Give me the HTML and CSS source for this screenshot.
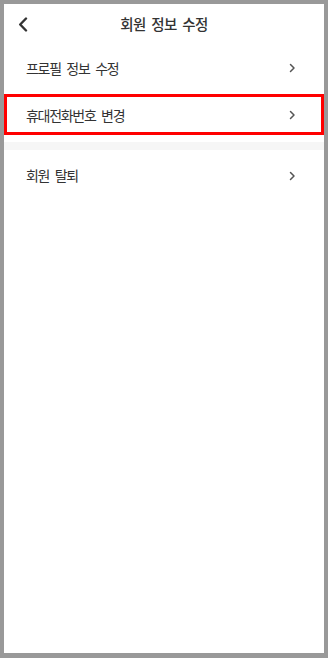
FILE: index.html
```html
<!DOCTYPE html>
<html lang="ko">
<head>
<meta charset="utf-8">
<title>회원 정보 수정</title>
<link rel="stylesheet" href="styles.css">
</head>
<body>
<div class="screen">
  <header class="header">
    <button class="back" aria-label="뒤로">
      <svg width="10" height="15" viewBox="0 0 10 15"><path d="M8 1.5 L2.2 7.5 L8 13.5" fill="none" stroke="#333" stroke-width="2.4" stroke-linecap="round" stroke-linejoin="round"/></svg>
    </button>
    <h1 class="title">회원 정보 수정</h1>
    <span class="spacer"></span>
  </header>
  <a class="row row-first" href="#"><span class="label">프로필 정보 수정</span><svg class="chev" width="7" height="10" viewBox="0 0 7 10"><path d="M1.5 1.5 L5 5 L1.5 8.5" fill="none" stroke="#555" stroke-width="1.5" stroke-linecap="round" stroke-linejoin="round"/></svg></a>
  <a class="row row-marked" href="#"><span class="label">휴대전화번호 변경</span><svg class="chev" width="7" height="10" viewBox="0 0 7 10"><path d="M1.5 1.5 L5 5 L1.5 8.5" fill="none" stroke="#555" stroke-width="1.5" stroke-linecap="round" stroke-linejoin="round"/></svg></a>
  <div class="band"></div>
  <a class="row row-last" href="#"><span class="label">회원 탈퇴</span><svg class="chev" width="7" height="10" viewBox="0 0 7 10"><path d="M1.5 1.5 L5 5 L1.5 8.5" fill="none" stroke="#555" stroke-width="1.5" stroke-linecap="round" stroke-linejoin="round"/></svg></a>
</div>
</body>
</html>
```

FILE: styles.css
```css
html, body {
  margin: 0;
  padding: 0;
  background: #999;
}
body {
  width: 328px;
  height: 658px;
  padding: 4px;
  box-sizing: border-box;
  font-family: "Noto Sans CJK KR", "Noto Sans", sans-serif;
  color: #333;
}
.screen {
  background: #fff;
  height: 649px;
  display: flex;
  flex-direction: column;
}
.header {
  height: 42px;
  display: flex;
  align-items: center;
}
.back {
  width: 44px;
  height: 42px;
  padding: 0 0 1px 14px;
  margin: 0;
  border: 0;
  background: none;
  display: flex;
  align-items: center;
}
.title {
  flex: 1;
  margin: 0 0 2px;
  text-align: center;
  font-size: 14.5px;
  font-weight: 500;
  letter-spacing: -0.6px;
  word-spacing: 2px;
  line-height: 1.2;
  color: #333;
}
.spacer {
  width: 44px;
}
.row {
  display: flex;
  align-items: center;
  justify-content: space-between;
  box-sizing: border-box;
  padding: 0 28px 0 22px;
  text-decoration: none;
  color: #333;
}
.label {
  font-size: 14px;
  font-weight: 400;
  letter-spacing: -1.3px;
  word-spacing: 3px;
  line-height: 1.2;
}
.chev {
  display: block;
}
.row-first {
  height: 48px;
  padding-bottom: 4px;
}
.row-marked {
  height: 41px;
  border: 3px solid #f00;
  padding: 1px 25px 0 19px;
}
.band {
  margin-top: 7px;
  height: 8px;
  background: #f6f6f6;
}
.row-last {
  height: 57px;
  padding-bottom: 6px;
}
```
